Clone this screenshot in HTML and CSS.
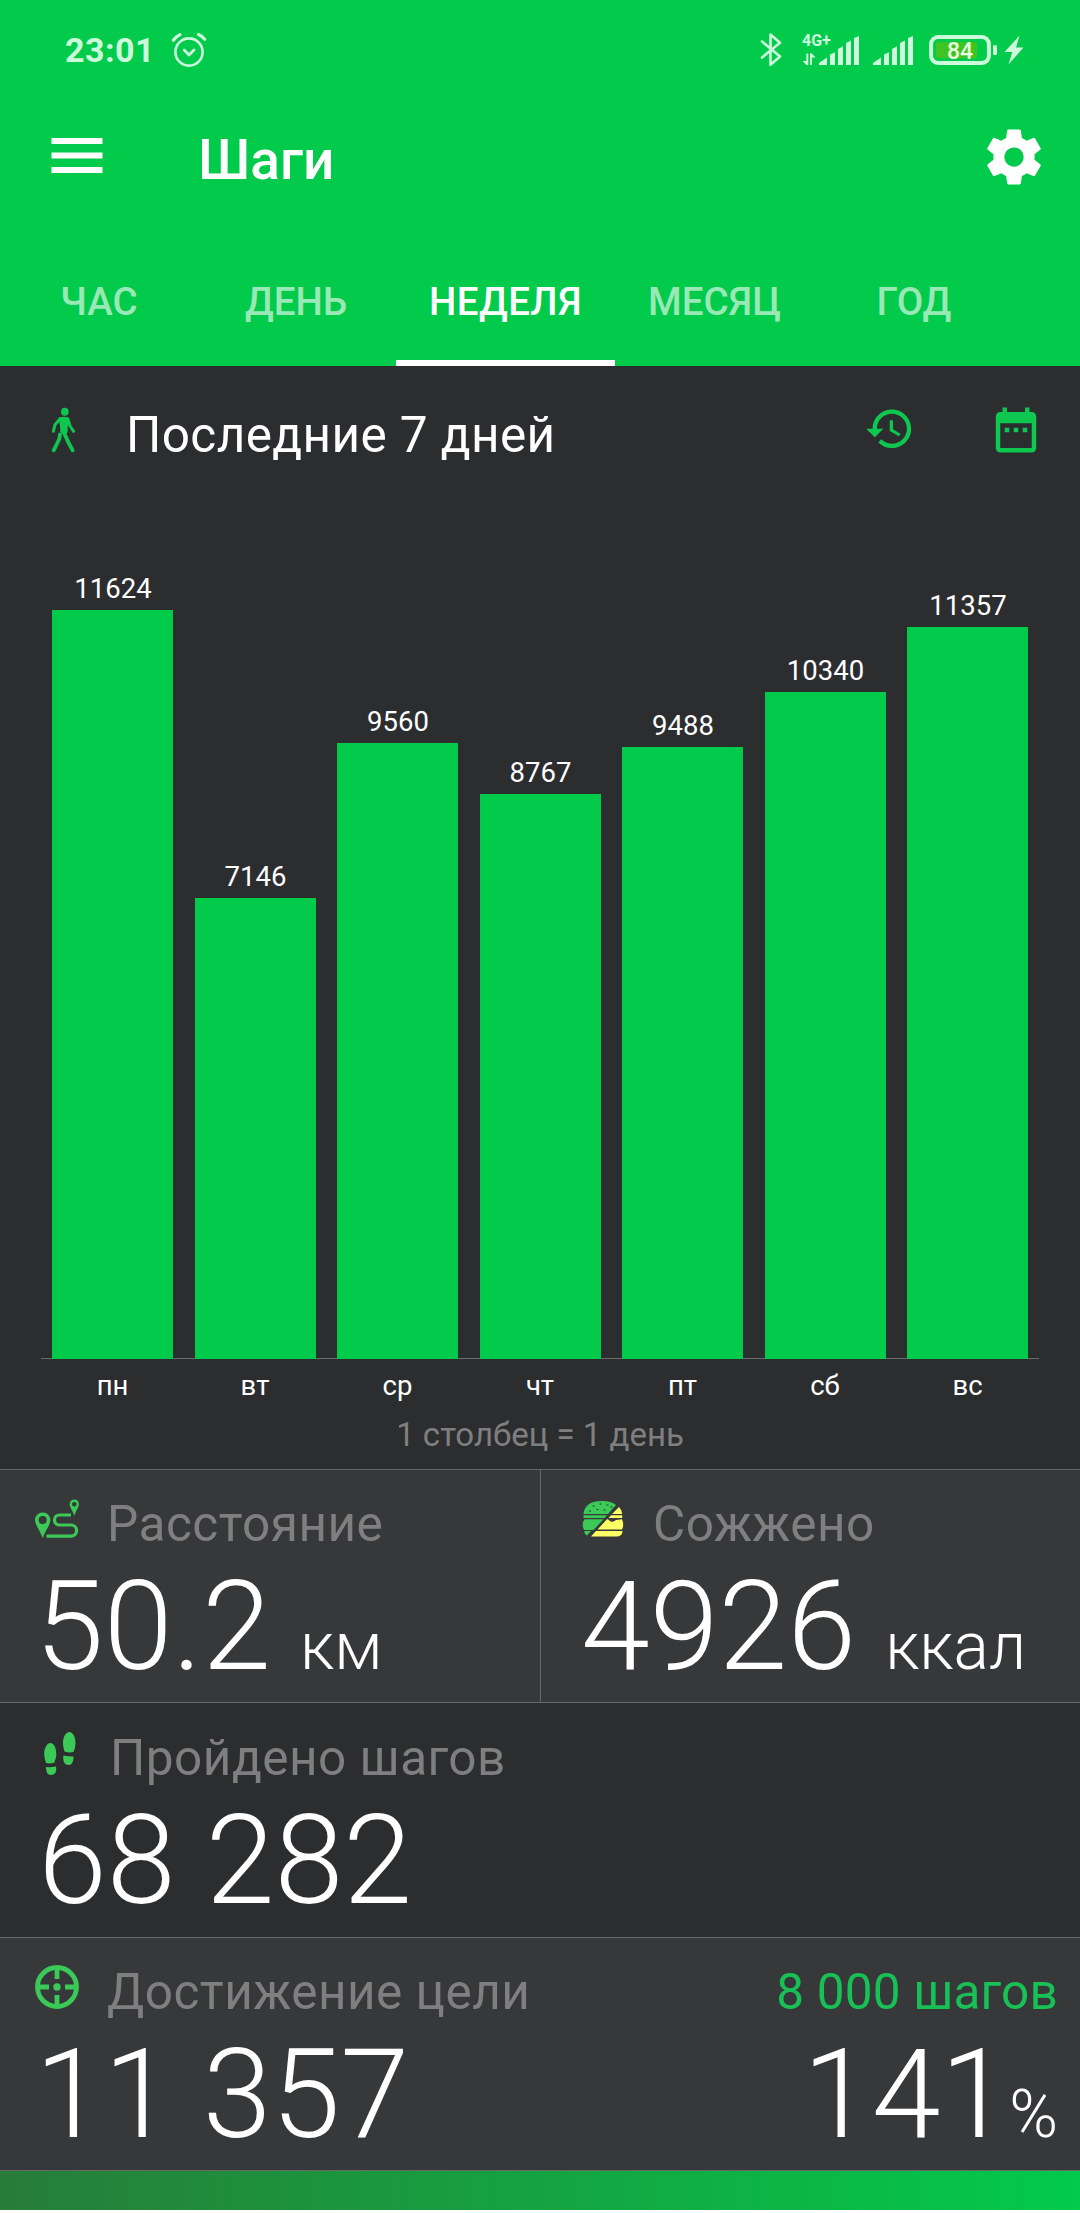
FILE: index.html
```
<!DOCTYPE html>
<html lang="ru">
<head>
<meta charset="utf-8">
<title>Шаги</title>
<link rel="stylesheet" href="styles.css">
</head>
<body>
<header class="top">
  <div class="status">
    <span class="clock">23:01</span>
    <svg class="alarm" width="36" height="36" viewBox="0 0 36 36" fill="none" stroke="currentColor" stroke-linecap="round" stroke-linejoin="round">
      <circle cx="18" cy="20" r="13.6" stroke-width="2.6"/>
      <path d="M13.2 18l4.8 5 5-5" stroke-width="2.8"/>
      <path d="M2.3 8.3Q5 4.500 9 2.600M33.700 7.200Q31 4 27.500 2.600" stroke-width="3.200"/>
    </svg>
    <div class="status-icons">
      <svg class="bt" width="22" height="36" viewBox="0 0 22 36" fill="none" stroke="currentColor" stroke-width="2.600" stroke-linejoin="round" stroke-linecap="round">
        <path d="M2 9.500L20 24.500 10.500 32.800V2.500L20 10.800 2 25.500"/>
      </svg>
      <svg class="net" width="57" height="46" viewBox="0 -6 57 46" fill="currentColor">
        <text class="net-text" x="0" y="13">4G+</text>
        <path d="M4.300 20.500h2V32h-2L.5 28h3.800zM8 20.500h2l3.500 4H10V32H8z"/>
        <path d="M17 32v-2l8-5.500V32zM28 32V21.500l5-2.300V32zM36 32V16l5-2.700V32zM44 32V10l5-2.600V32zM52 32V5l5-2v29z"/>
      </svg>
      <svg class="sig" width="40" height="34" viewBox="17 0 40 34" fill="currentColor">
        <path d="M17 32v-2l8-5.500V32zM28 32V21.500l5-2.300V32zM36 32V16l5-2.700V32zM44 32V10l5-2.600V32zM52 32V5l5-2v29z"/>
      </svg>
      <svg class="batt" width="68" height="30" viewBox="0 0 68 30">
        <rect x="7" y="7" width="41" height="16" rx="2" fill="#40c41f"/>
        <rect x="2.100" y="2.100" width="57.800" height="25.800" rx="7" fill="none" stroke="currentColor" stroke-width="4"/>
        <rect x="64" y="10" width="4" height="10" rx="1.500" fill="currentColor"/>
        <text class="batt-text" x="31" y="24" text-anchor="middle">84</text>
      </svg>
      <svg width="20" height="30" viewBox="0 0 20 30" fill="currentColor"><path d="M15.500.5L.5 17h7.800L4.500 29.500 19.500 12.500h-7.500z"/></svg>
    </div>
  </div>
  <div class="appbar">
    <svg class="menu" width="52" height="36" viewBox="0 0 52 36" fill="currentColor"><path d="M.5 0h51v6H.5zM.5 14.500h51v6H.5zM.5 29h51v6H.5z"/></svg>
    <h1 class="title">Шаги</h1>
    <svg class="gear" width="66" height="66" viewBox="0 0 24 24" fill="currentColor"><path d="M19.430 12.980c.04-.32.07-.64.07-.98s-.03-.66-.07-.98l2.110-1.650c.19-.15.24-.42.12-.64l-2-3.460c-.12-.22-.39-.3-.61-.22l-2.490 1c-.52-.4-1.080-.73-1.690-.98l-.38-2.650C14.460 2.180 14.250 2 14 2h-4c-.25 0-.46.18-.49.42l-.38 2.650c-.61.25-1.170.59-1.690.98l-2.490-1c-.23-.09-.49 0-.61.22l-2 3.460c-.13.22-.07.49.12.64l2.110 1.650c-.04.32-.07.65-.07.98s.03.66.07.98l-2.110 1.650c-.19.15-.24.42-.12.64l2 3.460c.12.22.39.3.61.22l2.490-1c.52.4 1.080.73 1.690.98l.38 2.650c.03.24.24.42.49.42h4c.25 0 .46-.18.49-.42l.38-2.650c.61-.25 1.170-.59 1.690-.98l2.490 1c.23.09.49 0 .61-.22l2-3.460c.12-.22.07-.49-.12-.64l-2.110-1.650zM12 15.500c-1.930 0-3.500-1.570-3.500-3.500s1.570-3.500 3.500-3.500 3.500 1.570 3.500 3.500-1.570 3.500-3.500 3.500z"/></svg>
  </div>
  <nav class="tabs">
    <a class="tab">ЧАС</a>
    <a class="tab tab-day">ДЕНЬ</a>
    <a class="tab tab-week">НЕДЕЛЯ</a>
    <a class="tab tab-month">МЕСЯЦ</a>
    <a class="tab tab-year">ГОД</a>
  </nav>
</header>

<main>
  <section class="chart-panel">
    <div class="period">
      <svg class="walker" width="50" height="70" viewBox="0 0 150 210" fill="none" stroke="currentColor" stroke-linecap="round" stroke-linejoin="round">
        <ellipse cx="74.500" cy="50" rx="11.500" ry="12" fill="currentColor" stroke="none"/>
        <path d="M61 67Q72 64 84 67Q90 70 88 80L83 95V112L74 120L61 112L60 92L56 72z" fill="currentColor" stroke="none"/>
        <path d="M60 71L45 89 40 109M84 73L90 93 101 109" stroke-width="9"/>
        <path d="M60 118L58 132 41 166M70 108L83 138 98 166" stroke-width="11.500"/>
      </svg>
      <h2 class="period-name">Последние 7 дней</h2>
      <svg class="history" width="51.500" height="51.500" viewBox="0 0 24 24" fill="currentColor"><path d="M13 3c-4.970 0-9 4.030-9 9H1l3.890 3.890.07.14L9 12H6c0-3.870 3.130-7 7-7s7 3.130 7 7-3.130 7-7 7c-1.930 0-3.680-.79-4.940-2.060l-1.420 1.420C8.270 19.990 10.510 21 13 21c4.970 0 9-4.030 9-9s-4.030-9-9-9zm-1 5v5l4.280 2.540.72-1.210-3.500-2.080V8H12z"/></svg>
      <svg class="calendar" width="54" height="54" viewBox="0 0 24 24" fill="currentColor"><path d="M9 11H7v2h2v-2zm4 0h-2v2h2v-2zm4 0h-2v2h2v-2zm2-7h-1V2h-2v2H8V2H6v2H5c-1.110 0-1.990.9-1.990 2L3 20c0 1.100.89 2 2 2h14c1.100 0 2-.9 2-2V6c0-1.100-.9-2-2-2zm0 16H5V9h14v11z"/></svg>
    </div>
    <div class="bars">
      <div class="col"><span class="num">11624</span><div class="bar" style="height:749px"></div></div>
      <div class="col"><span class="num">7146</span><div class="bar" style="height:461px"></div></div>
      <div class="col"><span class="num">9560</span><div class="bar" style="height:616px"></div></div>
      <div class="col"><span class="num">8767</span><div class="bar" style="height:565px"></div></div>
      <div class="col"><span class="num">9488</span><div class="bar" style="height:612px"></div></div>
      <div class="col"><span class="num">10340</span><div class="bar" style="height:667px"></div></div>
      <div class="col"><span class="num">11357</span><div class="bar" style="height:732px"></div></div>
    </div>
    <div class="days"><span>пн</span><span>вт</span><span>ср</span><span>чт</span><span>пт</span><span>сб</span><span>вс</span></div>
    <p class="legend">1 столбец = 1 день</p>
  </section>

  <section class="row light">
    <div class="card distance">
      <div class="head">
        <svg width="44" height="44" viewBox="0 0 44 44">
          <path fill="currentColor" fill-rule="evenodd" d="M7.700 15.500C3.400 15.500 0 18.800 0 22.800 0 28 4.800 33 7.700 41 10.600 33 15.400 28 15.400 22.800 15.400 18.800 12 15.500 7.700 15.500zM7.700 19a4 4 0 1 1 0 8 4 4 0 0 1 0-8zM39.300 2.500C36.700 2.500 34.700 4.500 34.700 7.200 34.700 10.500 37.600 13 39.300 19 41 13 43.900 10.500 43.900 7.200 43.900 4.500 41.900 2.500 39.300 2.500zM39.300 5a2.300 2.300 0 1 1 0 4.600 2.300 2.300 0 0 1 0-4.600z"/>
          <path fill="none" stroke="currentColor" stroke-width="3.200" d="M36 18H24.500a4.900 4.900 0 0 0 0 10H36a5.600 5.600 0 0 1 0 11.200H11.500"/>
        </svg>
        <span class="label">Расстояние</span>
      </div>
      <div class="value">50.2<span class="unit">км</span></div>
    </div>
    <div class="card burned">
      <div class="head">
        <svg width="44" height="44" viewBox="0 0 44 44">
          <path fill="currentColor" d="M2.500 17C3 8.500 10 4 21 4 27.500 4 32 5.500 35 8L27 17z"/>
          <path fill="currentColor" d="M2.500 18.200H26L23.500 21H2.500zM3.500 22.200H22.500L12.500 33H3Q0 27 3.500 22.200zM3.500 34H10L6 38.500Q3 37.500 3.500 34z"/>
          <path fill="#ffff66" d="M38 10Q41 13 41.200 17H31zM30 18.200H41.200V21H27.500zM26 22.200H27Q31 27 35 23L41 22.200Q43.500 28 41 32.500H16.500zM15 34H41.500Q41.500 39 36 39.500H10z"/>
          <path fill="none" stroke="#2c2d2f" stroke-width="1.200" stroke-linecap="round" d="M12 9h1M19 7h1M26 8h1M8.500 14h1M16 12.500h1M23 13h1M30 10h1"/>
        </svg>
        <span class="label">Сожжено</span>
      </div>
      <div class="value">4926<span class="unit">ккал</span></div>
    </div>
  </section>

  <section class="row middle">
    <div class="card steps">
      <div class="head">
        <svg width="44" height="44" viewBox="0 0 44 44" fill="currentColor">
          <path d="M15.500 12C11.500 12 9 18 9.200 23.500 9.300 27 10.500 30 11 32Q15.500 33 19.500 31.500C20 29 21.300 26.500 21.300 23.500 21.300 17 19 12 15.500 12zM11 36Q15.500 36.500 21 35.500C22 40.500 20 44 16 44 12.500 44 11 41 11 36z"/>
          <path d="M34.500 1C30.500 1 28 6.500 28 12 28 15.500 29 18 29.500 20.500Q34 22 38.500 21C39.500 18 40.500 16 40.500 12 40.500 6 38 1 34.500 1zM28.500 24.500Q33 25.500 38.500 25.500C38.500 31 37 34 33.500 34 29.500 34 27.500 30 28.500 24.500z"/>
        </svg>
        <span class="label">Пройдено шагов</span>
      </div>
      <div class="value">68 282</div>
    </div>
  </section>

  <section class="row light">
    <div class="card goal">
      <div class="head">
        <svg width="44" height="44" viewBox="0 0 44 44" fill="none" stroke="currentColor" stroke-width="4.800">
          <circle cx="22" cy="22" r="19.500"/>
          <circle cx="22" cy="22" r="3.700" fill="currentColor" stroke="none"/>
          <path d="M22 2v12M22 30v12M2 22h12M30 22h12"/>
        </svg>
        <span class="label">Достижение цели</span>
        <span class="target">8 000 шагов</span>
      </div>
      <div class="value split"><span>11 357</span><span>141<span class="percent">%</span></span></div>
    </div>
  </section>
  <div class="progress"></div>
</main>
</body>
</html>
```
FILE: styles.css
```
* { box-sizing: border-box; }

body {
  margin: 0;
  background: #fff;
  color: #fff;
  font-family: Roboto, "Noto Sans", sans-serif;
}

svg { display: block; flex: none; }

h1, h2, p { margin: 0; }

.top {
  height: 366px;
  background: #02ca4b;
}

/* Status bar */
.status {
  display: flex;
  align-items: center;
  height: 99px;
  padding: 0 56px 0 65px;
  color: #ccfadb;
}

.clock {
  width: 106px;
  font-size: 34px;
  font-weight: 700;
  letter-spacing: .5px;
}

.status-icons {
  display: flex;
  align-items: center;
  height: 98px;
  margin-left: auto;
}

.bt { margin-right: 20px; }
.net { margin-right: 14px; }
.sig { margin-right: 16px; }
.batt { margin-right: 7px; }

.net-text {
  font-size: 16px;
  font-weight: 700;
}

.batt-text {
  font-size: 23px;
  font-weight: 500;
  fill: #e9ffe0;
}

/* App bar */
.appbar {
  display: flex;
  align-items: center;
  height: 118px;
  margin: 2px 0 19px;
  padding: 0 33px 0 51px;
}

.menu {
  margin-bottom: 8px;
}

.title {
  margin-left: 95px;
  font-size: 55px;
  font-weight: 500;
}

.gear {
  margin: 0 0 6px auto;
}

/* Tabs */
.tabs {
  display: flex;
}

.tab {
  width: 198px;
  height: 128px;
  font-size: 38.5px;
  font-weight: 500;
  line-height: 128px;
  text-align: center;
  color: rgba(255, 255, 255, .6);
}

.tab-week {
  width: 219px;
  color: #fff;
  letter-spacing: .4px;
  box-shadow: inset 0 -6px #fff;
}

.tab-month { width: 201px; }

.tab-day, .tab-month, .tab-year { padding-right: 2px; }

/* Chart */
.chart-panel {
  height: 1103px;
  background: #2c2d2f;
}

.period {
  display: flex;
  align-items: center;
  height: 138px;
  padding: 0 37px 0 40px;
  color: #0ec750;
}

.walker { margin: 0 36px 10px 0; }

.period-name {
  font-size: 49.5px;
  font-weight: 400;
  letter-spacing: .4px;
  color: #fff;
}

.history { margin: 0 74px 12px auto; }
.calendar { margin-bottom: 11px; }

.bars {
  display: flex;
  align-items: flex-end;
  justify-content: space-between;
  height: 855px;
  margin: 0 41px;
  padding: 0 11px;
  background: linear-gradient(#6b6c6d, #6b6c6d) bottom / 100% 1px no-repeat;
}

.col {
  display: flex;
  flex-direction: column;
  align-items: center;
  width: 121px;
}

.num {
  margin-bottom: 5px;
  padding-left: 1px;
  font-size: 27.5px;
  line-height: 32px;
}

.bar {
  width: 100%;
  background: #02ca4b;
}

.days {
  display: flex;
  justify-content: space-between;
  padding: 0 52px;
  font-size: 27.5px;
  line-height: 53px;
  text-align: center;
}

.days span { width: 121px; }

.legend {
  font-size: 33px;
  line-height: 46px;
  text-align: center;
  color: #7f7f7f;
}

/* Summary */
.row {
  display: flex;
  height: 233px;
  background: #2c2d2f;
  border-top: 1px solid #66686a;
}

.middle { height: 235px; }

.light { background: #373839; }

.card {
  flex: 1;
  padding: 0 22px 0 35px;
}

.distance { flex: 0 0 540px; }

.burned {
  border-left: 1px solid #66686a;
  padding-left: 40px;
}

.steps { padding-top: 1px; }
.steps .value { padding-left: 3px; }

.head {
  display: flex;
  height: 108px;
  font-size: 49.5px;
  line-height: 108px;
  color: #3bc958;
}

.head svg { margin-top: 27px; }

.label {
  margin-left: 28px;
  letter-spacing: .5px;
  color: #7f7f7f;
}

.steps .label { margin-left: 31px; }

.target {
  margin-left: auto;
  letter-spacing: .2px;
  color: #18c155;
}

.value {
  font-size: 124px;
  font-weight: 300;
  line-height: 97px;
  white-space: nowrap;
}

.split {
  display: flex;
  justify-content: space-between;
}

.unit, .percent {
  font-size: 66px;
  line-height: 1;
}

.unit { margin-left: 29px; }

/* Goal progress */
.progress {
  height: 40px;
  background: linear-gradient(90deg, #277c38, #02ca4b);
  border-top: 1px solid #66686a;
}
```
